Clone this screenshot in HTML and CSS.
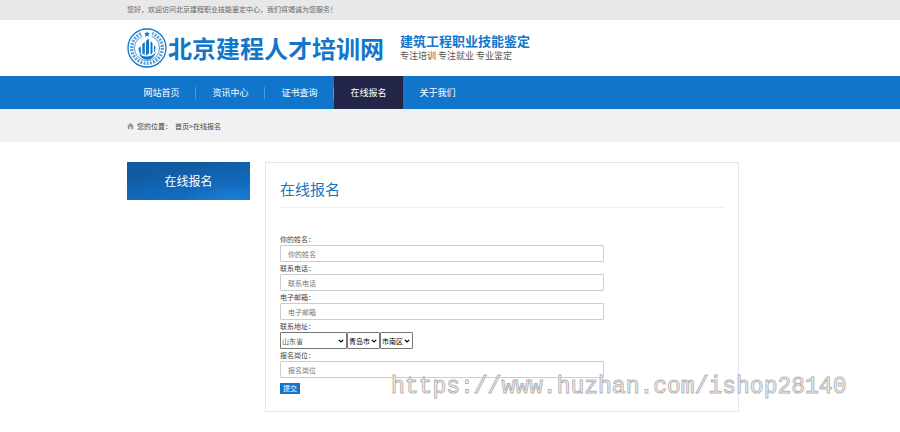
FILE: index.html
```html
<!DOCTYPE html>
<html lang="zh-CN">
<head>
<meta charset="utf-8">
<meta name="viewport" content="width=device-width, initial-scale=1">
<title>在线报名</title>
<link rel="stylesheet" href="styles.css">
</head>
<body>
<div class="topbar"><div class="container">您好，欢迎访问北京建程职业技能鉴定中心，我们将竭诚为您服务！</div></div>
<header class="container header">
  <a class="brand" href="#">
    <svg class="emblem" viewBox="0 0 40 40" aria-hidden="true">
      <g fill="none" stroke="#1276cb">
        <circle cx="20" cy="20" r="19" stroke-width="1.300"/>
        <circle cx="20" cy="20" r="15.300" stroke-width="3.400" stroke-dasharray="1.800 1.200" opacity=".7" pathLength="90"/>
        <circle cx="20" cy="20" r="12.600" stroke-width=".7"/>
      </g>
      <path d="M14 2.500h12l-1.500 6.500h-9z" fill="#fff"/>
      <path d="M20 3.200l.9 1.900 2 .2-1.500 1.400.5 2-1.900-1-1.900 1 .5-2-1.500-1.400 2-.2z" fill="#1276cb"/>
      <g fill="#1276cb">
        <path d="M11.500 20l2.300-1.500v6.500q1 2 2.500 2.500-4.800-1.300-4.800-7.500z"/>
        <path d="M15.300 16l2.500-2v13l-2.500-1.500z"/>
        <path d="M19 13q1.500-2 3-2v13.500q0 2-3 3z"/>
        <path d="M23.500 13.500q2 .5 2 2V24q0 2-2 2.500z"/>
        <path d="M27 17.500q1.500.5 1.500 2 0 3.500-1.500 5z"/>
        <path d="M12 25.500q3.500 3.500 8.500 3 5.500-.5 8.500-4.500-2.500 7.500-8.500 7.700-6 .2-8.500-6.200z"/>
      </g>
    </svg>
    <span class="brand-name">北京建程人才培训网</span>
  </a>
  <div class="tagline">
    <strong>建筑工程职业技能鉴定</strong>
    <span>专注培训 专注就业 专业鉴定</span>
  </div>
</header>
<nav class="nav">
  <div class="container nav-list">
    <a href="#">网站首页</a>
    <a href="#">资讯中心</a>
    <a href="#">证书查询</a>
    <a class="active" href="#">在线报名</a>
    <a href="#">关于我们</a>
  </div>
</nav>
<div class="crumbs">
  <div class="container crumbs-row">
    <svg class="home" viewBox="0 0 8 8" aria-hidden="true"><path d="M4 .3L8 4.200H7V7.600H4.900V5.200H3.100V7.600H1V4.200H0z" fill="#999"/></svg>
    <span>您的位置：</span><span><a href="#">首页</a>&gt;<a href="#">在线报名</a></span>
  </div>
</div>
<div class="container content">
  <aside class="side-title">在线报名</aside>
  <main class="panel">
    <h1>在线报名</h1>
    <form>
      <label for="name">你的姓名：</label>
      <input id="name" type="text" placeholder="你的姓名">
      <label for="phone">联系电话：</label>
      <input id="phone" type="text" placeholder="联系电话">
      <label for="email">电子邮箱：</label>
      <input id="email" type="text" placeholder="电子邮箱">
      <label for="province">联系地址：</label>
      <div class="selects">
        <select id="province" class="province"><option>山东省</option></select>
        <select aria-label="市"><option>青岛市</option></select>
        <select aria-label="区"><option>市南区</option></select>
      </div>
      <label for="job">报名岗位：</label>
      <input id="job" type="text" placeholder="报名岗位">
      <button type="button">提交</button>
    </form>
  </main>
</div>
<div class="watermark">https://www.huzhan.com/ishop28140</div>
</body>
</html>
```
FILE: styles.css
```css
* { box-sizing: border-box; }
body {
  margin: 0;
  background: #fff;
  color: #444;
  font: 7px/12px "Noto Sans CJK SC", sans-serif;
}
a { color: inherit; text-decoration: none; }
.container { max-width: 646px; margin: 0 auto; }
.topbar { background: #e8e8e8; color: #666; line-height: 18px; padding-bottom: 2px; }
.header { display: flex; align-items: center; gap: 12px; height: 56px; }
.brand { display: flex; align-items: center; gap: 1px; color: #1276cb; }
.emblem { width: 40px; height: 40px; }
.brand-name { font-size: 24px; line-height: 40px; font-weight: 700; white-space: nowrap; padding-right: 4px; }
.tagline { display: flex; flex-direction: column; color: #555; font-size: 9px; line-height: 14px; }
.tagline strong { color: #1276cb; font-size: 13px; line-height: 16px; }
.nav { background: #1075cb; }
.nav-list { display: flex; }
.nav-list a {
  flex: 0 0 69px;
  color: #fff;
  font-size: 9px;
  line-height: 33px;
  text-align: center;
  background: linear-gradient(#4b9ae0, #4b9ae0) right center / 1px 12px no-repeat;
}
.nav-list a.active { background: #232549; }
.nav-list a:last-child { background: none; }
.crumbs { background: #f1f1f1; }
.crumbs-row { display: flex; align-items: center; gap: 3px; height: 33px; color: #444; }
.home { width: 7px; height: 8px; }
.content { display: flex; align-items: flex-start; gap: 15px; padding-top: 20px; }
.side-title {
  flex: 0 0 123px;
  color: #fff;
  font-size: 12px;
  line-height: 38px;
  text-align: center;
  background:
    radial-gradient(ellipse at 86% 105%, #1d7fd5 0, #1d7fd500 34%),
    linear-gradient(170deg, #115ba2 25%, #1268b8 60%, #1272c8);
}
.panel { flex: 0 1 474px; border: 1px solid #e6e6e6; padding: 14px 14px 17px; }
h1 {
  margin: 0 0 25px;
  padding-bottom: 7px;
  border-bottom: 1px solid #eee;
  color: #1e73be;
  font-size: 15px;
  line-height: 23px;
  font-weight: 400;
}
label { display: block; }
input, select, button { font: inherit; border-radius: 1px; }
input {
  display: block;
  width: 73%;
  height: 17px;
  padding: 0 7px;
  border: 1px solid #ccc;
  background: #fff;
}
input::placeholder { color: #777; opacity: 1; }
.selects { display: flex; }
select {
  appearance: none;
  width: 33px;
  height: 17px;
  padding: 0 0 0 1px;
  border: 1px solid #777;
  color: #000;
  background: #fff url("data:image/svg+xml,%3Csvg xmlns='http://www.w3.org/2000/svg' viewBox='0 0 6 4'%3E%3Cpath d='M.8.8L3 3 5.200.8' fill='none' stroke='%23000' stroke-width='1.200'/%3E%3C/svg%3E") right 2px center / 6px 4px no-repeat;
}
.province { width: 67px; color: #555; }
button {
  display: block;
  margin-top: 5px;
  padding: 0 3px;
  border: 0;
  border-radius: 0;
  background: #1075cb;
  color: #fff;
  line-height: 11px;
}
.watermark {
  position: absolute;
  left: 391px;
  top: 373px;
  color: #fff;
  font: 23px/28px "Liberation Mono", monospace;
  -webkit-text-stroke: 1px #b4b4b4;
  pointer-events: none;
}
```
